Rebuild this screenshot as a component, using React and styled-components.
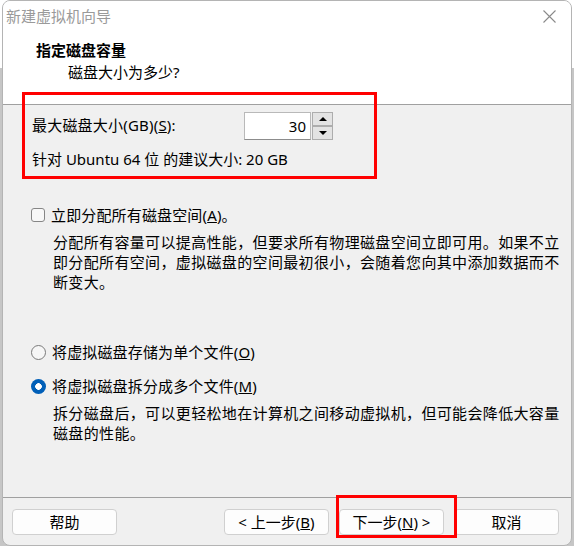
import styled, { createGlobalStyle } from "styled-components";

const GlobalStyle = createGlobalStyle`
  html, body {
    margin: 0;
  }
  body {
    background: linear-gradient(to bottom, #ffffff 68px, #c6c6c6 68px);
    font-family: "Noto Sans", "Noto Sans CJK SC", sans-serif;
    font-size: 15px;
    color: #000;
  }
`;

const Window = styled.div`
  position: relative;
  box-sizing: border-box;
  width: 570px;
  height: 546px;
  margin-left: 2px;
  display: flex;
  flex-direction: column;
  background: #f0f0f0;
  border: 1px solid #b4b4b4;
  border-radius: 8px;
  overflow: hidden;
`;

const TitleBar = styled.div`
  flex: none;
  height: 31px;
  display: flex;
  align-items: center;
  justify-content: space-between;
  padding: 0 15px 0 3px;
  background: #fff;
  color: #9a9a9a;
  line-height: 31px;
`;

const Header = styled.header`
  flex: none;
  box-sizing: border-box;
  height: 73px;
  padding: 7px 0 0 33px;
  background: #fff;
  border-bottom: 1px solid #a0a0a0;
  line-height: 22px;

  h1 {
    margin: 0;
    font-size: 15px;
    font-weight: 700;
  }
  p {
    margin: 0;
    padding-left: 32px;
  }
`;

const Body = styled.main`
  flex: 1;
  display: flex;
  flex-direction: column;
  align-items: flex-start;
  padding: 7px 28px 0;
  line-height: 20px;
`;

// red annotation frame drawn over whatever it wraps
const Highlight = styled.div`
  position: relative;
  display: flex;
  flex-direction: column;

  &::after {
    content: "";
    position: absolute;
    top: -${(p) => p.$top}px;
    left: -${(p) => p.$left}px;
    right: -${(p) => p.$right}px;
    bottom: -${(p) => p.$bottom}px;
    border: 3px solid #ff0000;
    pointer-events: none;
    z-index: 2;
  }
`;

const SizeSection = styled.section`
  margin-left: 1px;
`;

const SizeRow = styled.div`
  display: flex;
  align-items: center;
  height: 28px;
`;

const SizeLabel = styled.label`
  width: 212px;
  margin-top: -2px;
  letter-spacing: 0.2px;
`;

const NumberInput = styled.input`
  box-sizing: border-box;
  width: 67px;
  height: 28px;
  margin: 0;
  padding: 0 4px 0 0;
  border: 1px solid #b9b9b9;
  border-bottom-color: #8c8c8c;
  background: #fff;
  font: inherit;
  text-align: right;
  outline: none;
`;

const Spinner = styled.div`
  display: flex;
  flex-direction: column;
  margin-left: 1px;
`;

const SpinButton = styled.div`
  box-sizing: border-box;
  width: 21px;
  height: 14px;
  display: flex;
  align-items: center;
  justify-content: center;
  border: 1px solid #adadad;
  background: #e3e3e3;

  &::before {
    content: "";
    border-left: 4px solid transparent;
    border-right: 4px solid transparent;
    ${(p) =>
      p.$down
        ? "border-top: 4px solid #000;"
        : "border-bottom: 4px solid #000;"}
  }
`;

const Hint = styled.div`
  margin-top: 9px;
`;

const OptionRow = styled.div`
  display: flex;
  align-items: center;
  gap: 6px;
  height: 20px;
  margin-top: ${(p) => p.$gap}px;
  letter-spacing: 0.15px;
`;

const Checkbox = styled.span`
  box-sizing: border-box;
  width: 14px;
  height: 14px;
  border: 1px solid #868686;
  border-radius: 3px;
  background: #f8f8f8;
`;

const Radio = styled.span`
  box-sizing: border-box;
  width: 15px;
  height: 15px;
  border-radius: 50%;
  ${(p) =>
    p.$checked
      ? "background: radial-gradient(circle, #fff 3px, #005fb8 3.6px);"
      : "border: 1px solid #7a7a7a; background: #f6f6f6;"}
`;

const Note = styled.p`
  margin: 7px 0 0 22px;
  white-space: nowrap;
  letter-spacing: 0.35px;
`;

const Footer = styled.footer`
  flex: none;
  box-sizing: border-box;
  height: 48px;
  display: flex;
  align-items: flex-start;
  padding: 11px 12px 0 9px;
  border-top: 1px solid #a0a0a0;
`;

const NavGroup = styled.div`
  display: flex;
  gap: 10px;
  margin-left: auto;
`;

const Button = styled.button`
  box-sizing: border-box;
  width: 105px;
  height: 26px;
  margin: 0;
  padding: 0;
  border: 1px solid #d0d0d0;
  border-radius: 4px;
  background: #fdfdfd;
  color: #000;
  font: inherit;
  line-height: 22px;
`;

function CloseIcon() {
  return (
    <svg width="13" height="13" viewBox="0 0 13 13">
      <path d="M0.5 0.5 L12.5 12.5 M12.5 0.5 L0.5 12.5" stroke="#8a8a8a" strokeWidth="1.1" fill="none" />
    </svg>
  );
}

export default function App() {
  return (
    <>
      <GlobalStyle />
      <Window>
        <TitleBar>
          <span>新建虚拟机向导</span>
          <CloseIcon />
        </TitleBar>

        <Header>
          <h1>指定磁盘容量</h1>
          <p>磁盘大小为多少?</p>
        </Header>

        <Body>
          <Highlight $top={20} $left={9} $right={44} $bottom={10}>
            <SizeSection>
              <SizeRow>
                <SizeLabel>
                  最大磁盘大小(GB)(<u>S</u>):
                </SizeLabel>
                <NumberInput readOnly value="30" />
                <Spinner>
                  <SpinButton />
                  <SpinButton $down />
                </Spinner>
              </SizeRow>
              <Hint>针对 Ubuntu 64 位 的建议大小: 20 GB</Hint>
            </SizeSection>
          </Highlight>

          <OptionRow $gap={36}>
            <Checkbox />
            <span>
              立即分配所有磁盘空间(<u>A</u>)。
            </span>
          </OptionRow>
          <Note>
            分配所有容量可以提高性能，但要求所有物理磁盘空间立即可用。如果不立
            <br />
            即分配所有空间，虚拟磁盘的空间最初很小，会随着您向其中添加数据而不
            <br />
            断变大。
          </Note>

          <OptionRow $gap={50}>
            <Radio />
            <span>
              将虚拟磁盘存储为单个文件(<u>O</u>)
            </span>
          </OptionRow>
          <OptionRow $gap={14}>
            <Radio $checked />
            <span>
              将虚拟磁盘拆分成多个文件(<u>M</u>)
            </span>
          </OptionRow>
          <Note>
            拆分磁盘后，可以更轻松地在计算机之间移动虚拟机，但可能会降低大容量
            <br />
            磁盘的性能。
          </Note>
        </Body>

        <Footer>
          <Button>帮助</Button>
          <NavGroup>
            <Button>
              &lt; 上一步(<u>B</u>)
            </Button>
            <Highlight $top={14} $left={3} $right={13} $bottom={3}>
              <Button>
                下一步(<u>N</u>) &gt;
              </Button>
            </Highlight>
            <Button>取消</Button>
          </NavGroup>
        </Footer>
      </Window>
    </>
  );
}
